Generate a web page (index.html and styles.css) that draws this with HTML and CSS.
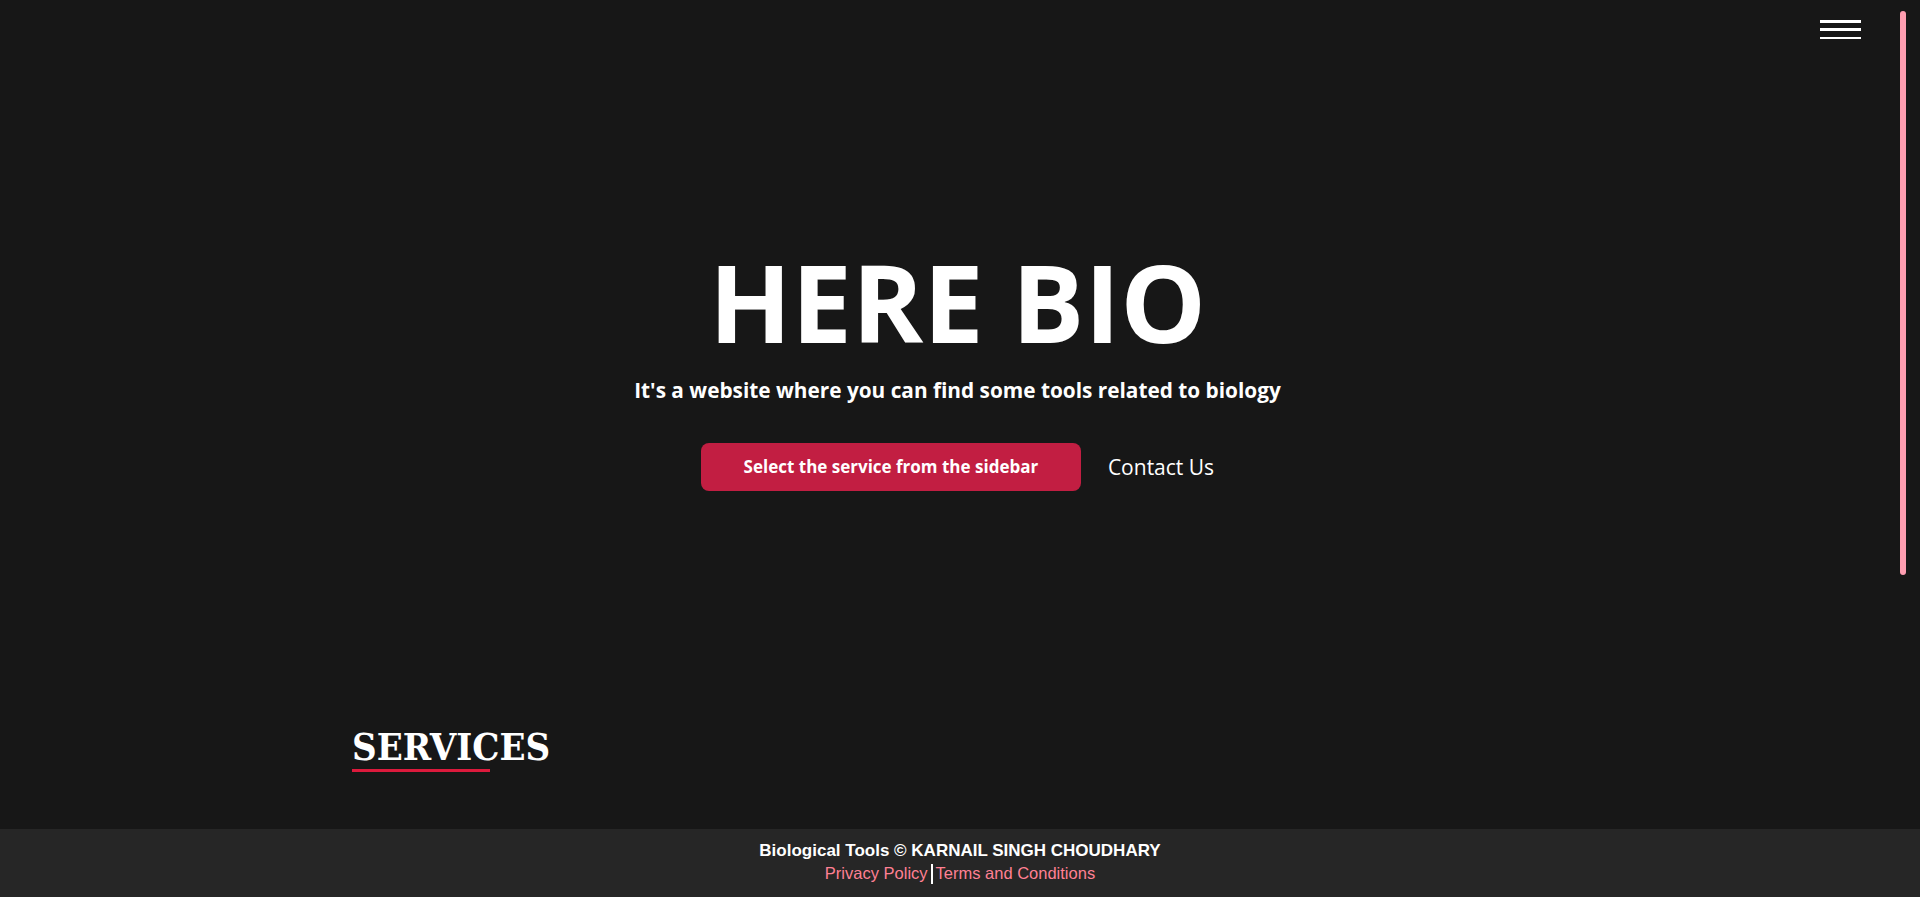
FILE: index.html
```html
<!DOCTYPE html>
<html lang="en">
<head>
<meta charset="utf-8">
<title>Here Bio</title>
<link rel="stylesheet" href="styles.css">
</head>
<body>
<button class="menu-toggle" aria-label="Open sidebar">
  <span class="menu-line"></span>
  <span class="menu-line"></span>
  <span class="menu-line thin"></span>
</button>
<div class="scroll-thumb"></div>
<div class="page">
  <section class="hero">
    <h1 class="hero-title">HERE BIO</h1>
    <p class="hero-subtitle">It's a website where you can find some tools related to biology</p>
    <div class="hero-actions">
      <a class="btn-primary" href="#">Select the service from the sidebar</a>
      <a class="btn-link" href="#">Contact Us</a>
    </div>
  </section>
  <section class="services">
    <h2 class="section-title">SERVICES</h2>
  </section>
  <footer class="footer">
    <p class="footer-copy">Biological Tools © KARNAIL SINGH CHOUDHARY</p>
    <p class="footer-links"><a href="#">Privacy Policy</a><span class="sep"></span><a href="#">Terms and Conditions</a></p>
  </footer>
</div>
</body>
</html>
```
FILE: styles.css
```css
* { box-sizing: border-box; }
html, body { margin: 0; padding: 0; }
body {
  background: #171717;
  color: #fff;
  font-family: "Open Sans", "Noto Sans", sans-serif;
  overflow: hidden;
}
.page {
  min-height: 100vh;
  display: flex;
  flex-direction: column;
}
.menu-toggle {
  position: fixed;
  top: 20px;
  right: 59px;
  width: 41px;
  padding: 0;
  border: 0;
  background: transparent;
  display: flex;
  flex-direction: column;
  gap: 5px;
  cursor: pointer;
}
.menu-line {
  display: block;
  width: 41px;
  height: 3px;
  background: #fff;
}
.menu-line.thin { height: 2px; margin-top: 1px; }
.scroll-thumb {
  position: fixed;
  top: 11px;
  right: 14px;
  width: 6px;
  height: 564px;
  border-radius: 3px;
  background: #ff9eb1;
}
.hero {
  height: 718px;
  display: flex;
  flex-direction: column;
  align-items: center;
  padding-top: 243px;
  padding-right: 5px;
}
.hero-title {
  margin: 0;
  font-size: 108px;
  font-weight: 700;
  line-height: 1.1;
  letter-spacing: 0;
}
.hero-subtitle {
  margin: 14px 0 0;
  font-size: 20.8px;
  font-weight: 700;
}
.hero-actions {
  margin-top: 39px;
  display: flex;
  align-items: center;
  gap: 27px;
}
.btn-primary {
  display: flex;
  align-items: center;
  justify-content: center;
  width: 380px;
  height: 48px;
  border-radius: 8px;
  background: #c21e42;
  color: #fff;
  text-decoration: none;
  font-size: 17px;
  font-weight: 700;
}
.btn-link {
  color: #fff;
  text-decoration: none;
  font-size: 21px;
}
.services {
  flex: 1;
  width: 1216px;
  margin: 0 auto;
  padding-top: 10px;
}
.section-title {
  display: inline-block;
  position: relative;
  margin: 0;
  padding-bottom: 6px;
  font-family: "DejaVu Serif Condensed", "DejaVu Serif", serif;
  font-weight: 700;
  font-size: 38px;
  line-height: 1;
}
.section-title::after {
  content: "";
  position: absolute;
  left: 0;
  bottom: 0;
  width: 138px;
  height: 3px;
  background: #dc1a3c;
}
.footer {
  background: #262626;
  padding: 10px 0 12px;
  text-align: center;
  font-family: "Liberation Sans", Arial, sans-serif;
  font-size: 17px;
  line-height: 23px;
}
.footer p { margin: 0; }
.footer-copy { font-weight: 700; }
.footer-links { font-size: 16.5px; }
.footer-links a { color: #ff8093; text-decoration: none; }
.sep {
  display: inline-block;
  width: 2px;
  height: 20px;
  background: #fff;
  margin: 0 3px;
  vertical-align: -5px;
}
```
